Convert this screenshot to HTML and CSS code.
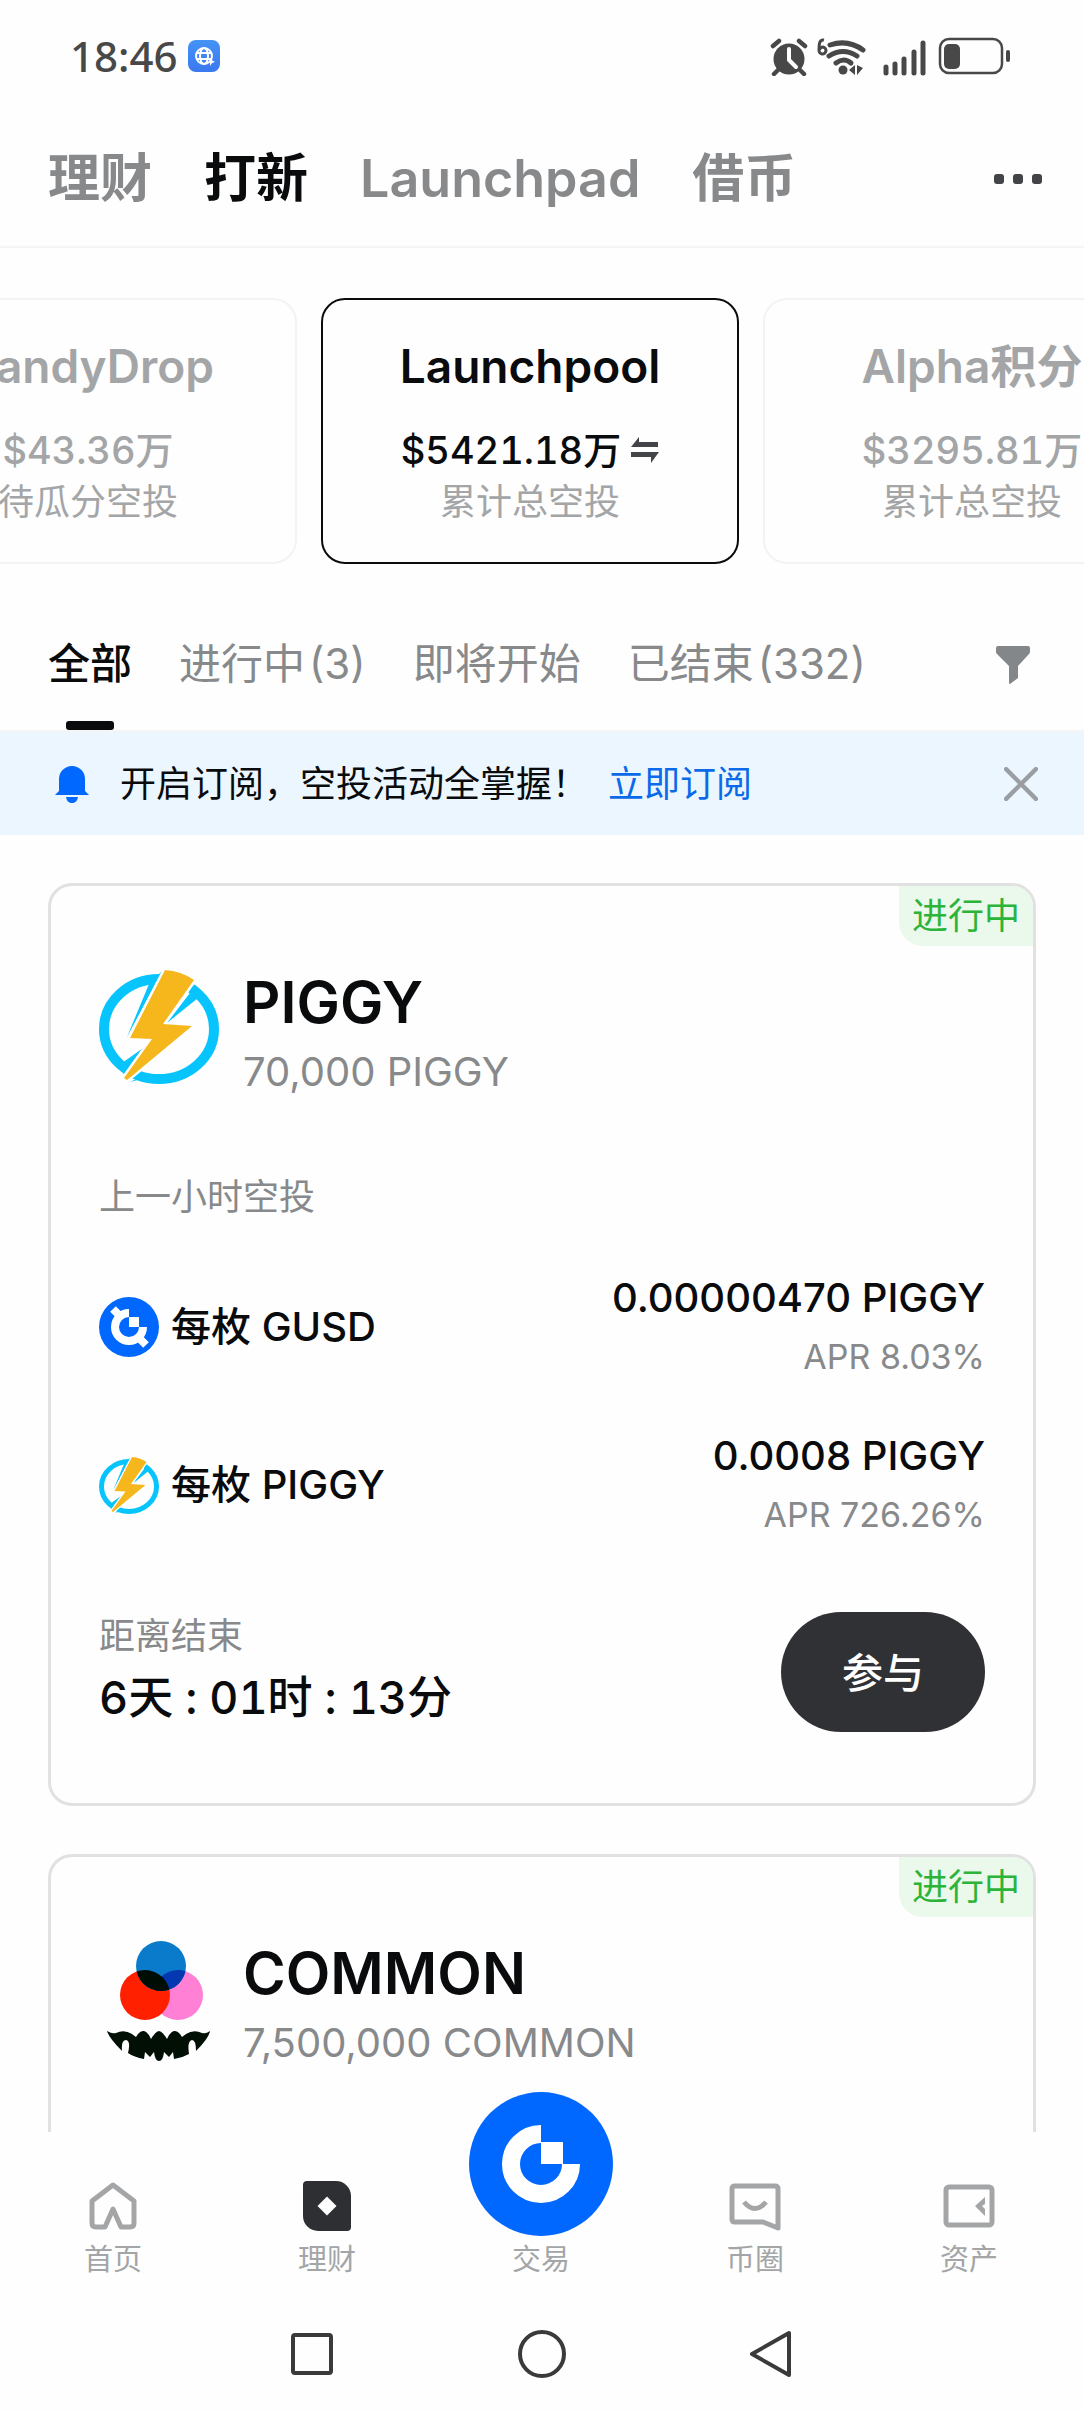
FILE: index.html
```html
<!DOCTYPE html>
<html lang="zh-CN">
<head>
<meta charset="utf-8">
<meta name="viewport" content="width=device-width, initial-scale=1">
<title>Launchpool</title>
<link rel="stylesheet" href="styles.css">
</head>
<body>
<svg class="defs" aria-hidden="true">
  <symbol id="logo-piggy" viewBox="0 0 120 120">
    <ellipse cx="60" cy="63" rx="55" ry="50" fill="none" stroke="#07c4fd" stroke-width="10"/>
    <path d="M64 4 28 71 50 18ZM97 19 68 57 99 32ZM23 97 47 80 24 108ZM31 116 37 113 46 112Z" fill="#07c4fd"/>
    <path d="M66 4Q82 5 95 14L64 58 93 60 28 114 25 112 53 73 31 72Z" fill="#f6b71c" stroke="#fff" stroke-width="5" paint-order="stroke"/>
  </symbol>
  <symbol id="logo-gusd" viewBox="0 0 60 60">
    <circle cx="30" cy="30" r="30" fill="#0068ff"/>
    <path d="M30 16A14 14 0 1 0 44 30" fill="none" stroke="#fff" stroke-width="8"/>
    <path d="M22 20 14 12M40 41 47 48" stroke="#fff" stroke-width="8"/>
    <path d="M30 20h10v10H30z" fill="#fff"/>
  </symbol>
  <symbol id="logo-common" viewBox="0 0 120 126">
    <clipPath id="clip-blue"><circle cx="62" cy="29" r="25"/></clipPath>
    <circle cx="79" cy="58" r="25" fill="#ff80d5"/>
    <circle cx="46" cy="58" r="25" fill="#ff2000"/>
    <circle cx="62" cy="29" r="25" fill="#0a7bcb"/>
    <g clip-path="url(#clip-blue)">
      <circle cx="79" cy="58" r="25" fill="#0338b0"/>
      <circle cx="46" cy="58" r="25" fill="#000d05"/>
    </g>
    <path d="M8 94Q13 97 17 96 27 91 37 100 41 93 45 94 49 95 52 102 57 94 60 94 63 94 68 102 71 95 75 94 79 93 83 100 93 91 103 96 107 97 111 94 110 101 97 114 97 103 93 103 88 104 90 117 83 121 75 122L74 115 70 120 65 115Q64 124 60 124 56 124 55 115L51 120 46 115 45 122Q35 120 29 116 32 104 27 103 22 103 23 114 10 101 8 94Z" fill="#020f04"/>
  </symbol>
</svg>

<header class="top">
  <div class="status">
    <div class="status-left">
      <time>18:46</time>
      <svg class="app-dot" viewBox="0 0 32 32"><defs><linearGradient id="sky" x2="0" y2="1"><stop stop-color="#4593f5"/><stop offset="1" stop-color="#3a78ee"/></linearGradient></defs><rect width="32" height="32" rx="8" fill="url(#sky)"/><g fill="none" stroke="#fff" stroke-width="2"><circle cx="16" cy="16" r="8"/><ellipse cx="16" cy="16" rx="4" ry="8"/><path d="M8 13h16M8 19h16"/></g><path d="M22 19l5 3-3 1-2 3z" fill="#fff"/></svg>
    </div>
    <svg class="status-icons" viewBox="0 0 242 40">
      <g fill="#484848">
        <circle cx="20" cy="23" r="15.500"/>
        <path d="M9 34 5 38M31 34l4 4M4 10l6-5M30 5l6 5" stroke="#484848" stroke-width="4.500" stroke-linecap="round"/>
        <path d="M20 13v11l7 7" fill="none" stroke="#fff" stroke-width="4" stroke-linecap="round" stroke-linejoin="round"/>
        <path d="M55 4C50 3 50 9 50 14a3.500 3.500 0 1 0 4-3c-2 0-3 1-4 3" fill="none" stroke="#484848" stroke-width="3"/>
        <path d="M61 9q18-6 33 5M60 20q14-9 28 0M67 27q8-6 15 0" fill="none" stroke="#484848" stroke-width="5" stroke-linecap="round"/>
        <circle cx="74" cy="34" r="4.500"/>
        <path d="M80 34l6-5v10zM88 29v10l6-7z"/>
        <path d="M117 31v6M126 28v9M135 23v14M145 16v21M154 7v30" stroke="#484848" stroke-width="5" stroke-linecap="round"/>
        <rect x="171" y="3" width="62" height="34" rx="9" fill="none" stroke="#484848" stroke-width="2.500"/>
        <rect x="175" y="8" width="16" height="25" rx="5"/>
        <rect x="237" y="14" width="4" height="12" rx="2"/>
      </g>
    </svg>
  </div>
  <nav class="sections">
    <a href="#earn">理财</a>
    <a href="#new" class="is-on">打新</a>
    <a href="#launchpad">Launchpad</a>
    <a href="#borrow">借币</a>
    <button class="more" aria-label="更多"><svg viewBox="0 0 48 10" fill="#424447"><rect width="10" height="10" rx="3"/><rect x="19" width="10" height="10" rx="3"/><rect x="38" width="10" height="10" rx="3"/></svg></button>
  </nav>
</header>

<main class="content">
  <section class="products">
    <a href="#candydrop" class="product"><h2>CandyDrop</h2><p class="amount">$43.36万</p><p class="note">待瓜分空投</p></a>
    <a href="#launchpool" class="product is-on"><h2>Launchpool</h2><p class="amount">$5421.18万<svg viewBox="0 0 28 26" fill="#424447"><path d="M0 10 8 0v5h19v5zM0 15h28L20 26v-6H0z"/></svg></p><p class="note">累计总空投</p></a>
    <a href="#alpha" class="product"><h2>Alpha积分</h2><p class="amount">$3295.81万</p><p class="note">累计总空投</p></a>
  </section>

  <nav class="filters">
    <a href="#all" class="is-on">全部</a>
    <a href="#live">进行中<span class="count">(3)</span></a>
    <a href="#soon">即将开始</a>
    <a href="#ended">已结束<span class="count">(332)</span></a>
    <button class="funnel" aria-label="筛选"><svg viewBox="0 0 34 38" fill="#84878a"><path d="M2 0h30q2 0 2 2v4q0 1-1 2L22 20v12l-8 6q-1 0-1-1V20L1 8Q0 7 0 6V2q0-2 2-2z"/></svg></button>
  </nav>

  <aside class="notice">
    <svg class="bell" viewBox="0 0 34 40" fill="#0068ff"><path d="M4 27V15a13 13 0 0 1 26 0v12l4 4H0zM11 33h12q-1 6-6 6t-6-6z"/></svg>
    <p>开启订阅，空投活动全掌握！</p>
    <a href="#subscribe">立即订阅</a>
    <button class="close" aria-label="关闭"><svg viewBox="0 0 32 32"><path d="M2 2l28 28M30 2 2 30" stroke="#9a9ea3" stroke-width="4" stroke-linecap="round"/></svg></button>
  </aside>

  <section class="pools">
    <article class="pool">
      <span class="badge">进行中</span>
      <div class="pool-head">
        <svg class="logo"><use href="#logo-piggy"/></svg>
        <div><h3>PIGGY</h3><p>70,000 PIGGY</p></div>
      </div>
      <p class="caption">上一小时空投</p>
      <div class="rates">
        <div class="rate">
          <svg class="coin"><use href="#logo-gusd"/></svg>
          <span class="coin-name">每枚 GUSD</span>
          <div class="yield"><p>0.00000470 PIGGY</p><p class="apr">APR 8.03%</p></div>
        </div>
        <div class="rate">
          <svg class="coin"><use href="#logo-piggy"/></svg>
          <span class="coin-name">每枚 PIGGY</span>
          <div class="yield"><p>0.0008 PIGGY</p><p class="apr">APR 726.26%</p></div>
        </div>
      </div>
      <div class="pool-foot">
        <div><p class="caption">距离结束</p><p class="countdown"><span>6天</span><span>:</span><span>01时</span><span>:</span><span>13分</span></p></div>
        <button class="join">参与</button>
      </div>
    </article>
    <article class="pool">
      <span class="badge">进行中</span>
      <div class="pool-head">
        <svg class="logo logo-tall"><use href="#logo-common"/></svg>
        <div><h3>COMMON</h3><p>7,500,000 COMMON</p></div>
      </div>
    </article>
  </section>
</main>

<footer class="bottom">
  <nav class="tabs">
    <a href="#home"><svg viewBox="0 0 52 52"><path d="M5 21 26 5 47 21V43q0 4-4 4H34L26 29 18 47H9q-4 0-4-4z" fill="none" stroke="#a3a5a7" stroke-width="5" stroke-linejoin="round"/></svg>首页</a>
    <a href="#finance"><svg viewBox="0 0 52 52"><path d="M6 1H35A15 15 0 0 1 50 16V47q0 4-4 4H17A15 15 0 0 1 2 36V5q0-4 4-4z" fill="#2d2f33"/><path d="M26 16.500 35.500 26 26 35.500 16.500 26z" fill="#fff"/></svg>理财</a>
    <a href="#trade" class="trade"><svg viewBox="0 0 144 144"><circle cx="72" cy="72" r="72" fill="#0068ff"/><path d="M72 42A30 30 0 1 0 102 72" fill="none" stroke="#fff" stroke-width="18"/><path d="M72 50h22v22H72z" fill="#fff"/></svg>交易</a>
    <a href="#circle"><svg viewBox="0 0 52 52"><path d="M6 6H46q3 0 3 3V48L34 42H6q-3 0-3-3V9q0-3 3-3z" fill="none" stroke="#a3a5a7" stroke-width="5" stroke-linejoin="round"/><path d="M15 22q11 13 22 0" fill="none" stroke="#a3a5a7" stroke-width="5"/></svg>币圈</a>
    <a href="#assets"><svg viewBox="0 0 52 52"><rect x="3" y="7" width="46" height="38" rx="3" fill="none" stroke="#a3a5a7" stroke-width="5"/><path d="M42 17v7l-3 2 3 3v7L32 26z" fill="#a3a5a7"/></svg>资产</a>
  </nav>
  <div class="keys">
    <button aria-label="最近任务"><svg viewBox="0 0 48 48"><rect x="5" y="5" width="38" height="38" rx="2"/></svg></button>
    <button aria-label="主屏幕"><svg viewBox="0 0 48 48"><circle cx="24" cy="24" r="22"/></svg></button>
    <button aria-label="返回"><svg viewBox="0 0 48 48"><path d="M41 3V45L4 24z"/></svg></button>
  </div>
</footer>
</body>
</html>
```
FILE: styles.css
```css
* { box-sizing: border-box; margin: 0; }
body {
  display: flex;
  flex-direction: column;
  height: 100vh;
  background: #fefefe;
  color: #0a0b0c;
  font-family: Inter, "Noto Sans CJK SC", sans-serif;
}
a { color: inherit; text-decoration: none; }
button { padding: 0; border: 0; background: none; font: inherit; color: inherit; }
svg { display: block; flex: none; }
h2, h3 { font-weight: 600; }
.defs { position: absolute; width: 0; height: 0; }

.status { display: flex; align-items: center; justify-content: space-between; height: 112px; padding: 0 73px 0 70px; }
.status-left { display: flex; align-items: center; gap: 10px; color: #484848; font: 500 42px/48px "Noto Sans", sans-serif; }
.app-dot { width: 32px; height: 32px; }
.status-icons { width: 242px; height: 40px; }

.sections { display: flex; align-items: center; gap: 52px; height: 136px; padding: 0 42px 0 48px; border-bottom: 2px solid #f5f5f5; color: #87898b; font-size: 52px; font-weight: 600; line-height: 72px; }
.sections .is-on { color: #0a0b0c; }
.more { margin-left: auto; }
.more svg { width: 48px; height: 10px; }

.content { flex: 1; min-height: 0; overflow: hidden auto; scrollbar-width: none; }
.products { display: flex; gap: 24px; margin-left: -121px; padding-top: 50px; overflow: hidden; }
.product { flex: none; width: 418px; padding: 32px 0 36px; border: 2px solid #f3f3f4; border-radius: 24px; color: #a3a5a7; text-align: center; }
.product h2 { font-size: 46px; line-height: 68px; }
.product .amount { display: flex; align-items: center; justify-content: center; gap: 10px; margin-top: 22px; font-size: 38px; font-weight: 500; font-variant-numeric: tabular-nums; line-height: 56px; }
.amount svg { width: 28px; height: 26px; }
.product .note { font-size: 36px; line-height: 48px; }
.product.is-on { border-color: #0a0b0c; color: #0a0b0c; }
.product.is-on .note { color: #a3a5a7; }

.filters { display: flex; gap: 47px; margin-top: 36px; padding: 0 54px 0 48px; border-bottom: 2px solid #f5f5f5; color: #87898b; font-size: 42px; line-height: 60px; }
.filters a { padding: 34px 0 36px; }
.filters .is-on { position: relative; color: #0a0b0c; font-weight: 500; }
.filters .is-on::after { content: ""; position: absolute; left: 50%; bottom: 0; width: 48px; height: 9px; margin-left: -24px; border-radius: 3px; background: #0a0b0c; }
.count { margin-left: 4px; }
.funnel { margin-left: auto; }
.funnel svg { width: 34px; height: 38px; }

.notice { display: flex; align-items: center; height: 103px; padding: 0 46px 0 55px; background: #ebf6ff; font-size: 36px; line-height: 48px; }
.bell { width: 34px; height: 40px; margin-right: 31px; }
.notice a { margin-left: 20px; color: #0b6ae8; }
.close { margin-left: auto; }
.close svg { width: 34px; height: 34px; }

.pools { display: grid; gap: 48px; padding: 48px; }
.pool { position: relative; min-height: 380px; padding: 80px 48px 67px; border: 3px solid #e1e1e2; border-radius: 24px; }
.badge { position: absolute; top: 0; right: 0; padding: 0 13px; border-radius: 0 20px 0 24px; background: #ebf8ec; color: #2cb43a; font-size: 36px; line-height: 60px; }
.pool-head { display: flex; gap: 24px; }
.logo { width: 120px; height: 120px; }
.logo-tall { height: 126px; }
.pool-head h3 { font-size: 58px; line-height: 72px; }
.pool-head p { color: #87898b; font-size: 40px; line-height: 68px; }
.caption { color: #87898b; font-size: 36px; line-height: 48px; }
.pool-head + .caption { margin-top: 67px; }
.rates { display: grid; gap: 40px; margin-top: 47px; }
.rate { display: flex; align-items: center; gap: 12px; font-size: 40px; font-weight: 500; line-height: 60px; }
.coin { width: 60px; height: 60px; }
.yield { margin-left: auto; text-align: right; }
.apr { color: #87898b; font-size: 34px; font-weight: 400; line-height: 58px; }
.pool-foot { display: flex; justify-content: space-between; margin-top: 68px; }
.countdown { display: flex; gap: 12px; font-size: 45px; font-weight: 500; font-variant-numeric: tabular-nums; line-height: 76px; }
.join { width: 204px; height: 120px; padding-bottom: 4px; border-radius: 60px; background: #303134; color: #fff; font-size: 41px; font-weight: 500; }

.bottom { background: #fefefe; }
.tabs { display: flex; justify-content: space-around; padding: 48px 8px 0 6px; }
.tabs a { display: flex; flex: 1; flex-direction: column; align-items: center; gap: 8px; color: #a3a5a7; font-size: 29px; line-height: 40px; }
.tabs svg { width: 52px; height: 52px; }
.tabs .trade svg { position: relative; width: 144px; height: 144px; margin-top: -88px; margin-bottom: -4px; }
.keys { display: flex; justify-content: center; gap: 182px; padding: 50px 0 34px; }
.keys svg { width: 48px; height: 48px; fill: none; stroke: #3a3a3a; stroke-width: 4; stroke-linejoin: round; }
```
